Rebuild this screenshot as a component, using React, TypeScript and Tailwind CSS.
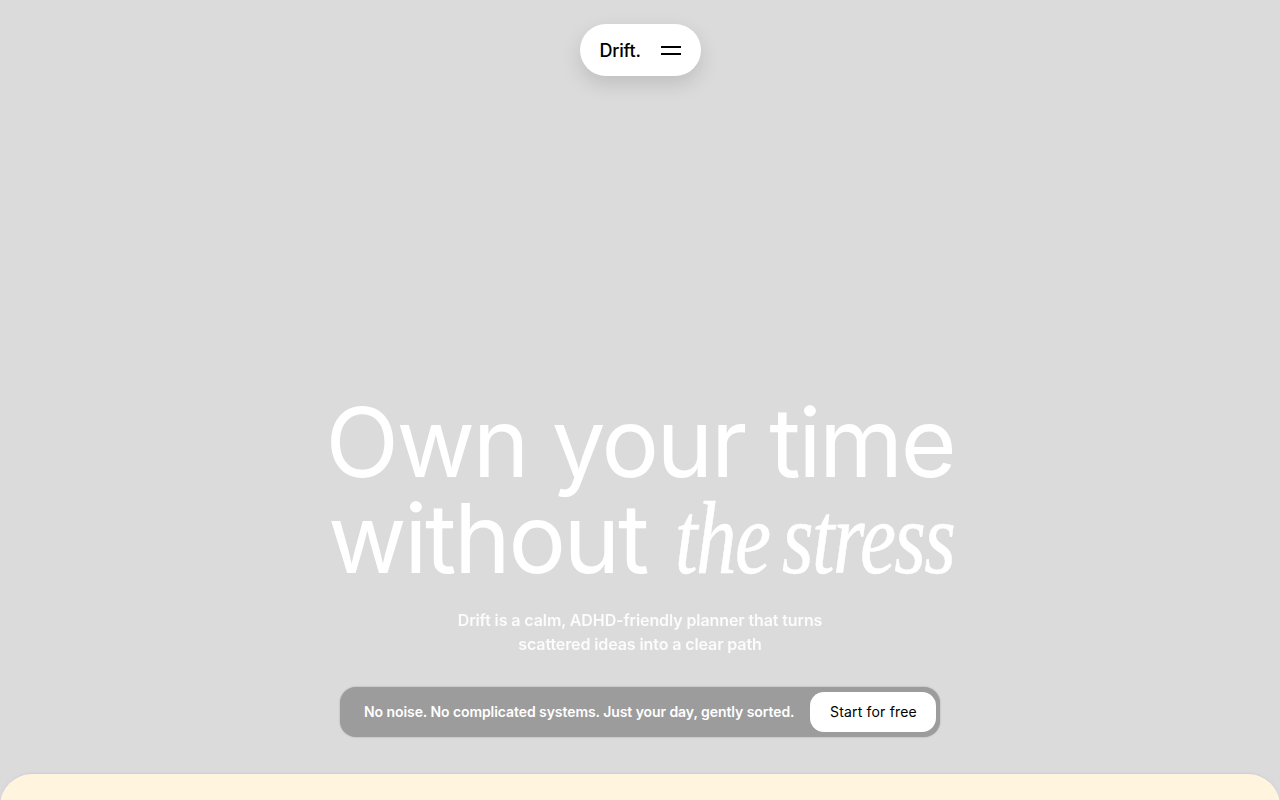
export default function App() {
  return (
    <div className="h-[800px] overflow-hidden bg-[#dbdbdb] flex flex-col items-center font-['Inter',sans-serif]">
      <nav className="mt-6 w-[121px] h-[52px] shrink-0 rounded-full bg-white flex items-center justify-between pl-5 pr-5 shadow-[0_8px_20px_rgba(0,0,0,0.13)]">
        <span className="pt-px text-[18px] font-medium leading-none tracking-[-0.2px] text-black">Drift.</span>
        <span className="flex flex-col gap-[5px] w-5">
          <span className="block h-[2px] w-5 bg-black" />
          <span className="block h-[2px] w-5 bg-black" />
        </span>
      </nav>
      <h1 className="mt-[318px] text-center text-white text-[96px] leading-[96px] font-normal tracking-[-2.4px] whitespace-nowrap blur-[0.4px]">
        <span className="block">Own your time</span>
        <span className="flex items-baseline justify-center gap-[28px]">
          <span>without</span>
          <span className="inline-block w-[277px] origin-left scale-x-[0.78] text-left font-['Liberation_Serif',serif] italic font-normal tracking-[-2px] [word-spacing:-8px] [-webkit-text-stroke:0.6px_white] text-[104px]">the stress</span>
        </span>
      </h1>
      <p className="mt-[22px] text-center text-white/90 text-[16px] leading-6 font-semibold tracking-[-0.1px] blur-[0.4px]">
        Drift is a calm, ADHD-friendly planner that turns
        <br />
        scattered ideas into a clear path
      </p>
      <div className="mt-[31px] w-[600px] h-[50px] shrink-0 rounded-[16px] bg-[#9c9c9c] flex items-center justify-between pl-6 pr-1 shadow-[0_0_2px_rgba(0,0,0,0.25)]">
        <span className="pb-[2px] text-[14px] font-semibold tracking-[-0.07px] text-white whitespace-nowrap">No noise. No complicated systems. Just your day, gently sorted.</span>
        <button className="w-[126px] h-10 pb-[2px] pl-px rounded-[14px] bg-white text-black text-[14px] font-normal tracking-[0.17px]">Start for free</button>
      </div>
      <div className="mt-[37px] w-full h-[100px] shrink-0 rounded-t-[32px] bg-[#fff5df] shadow-[0_-1px_2px_rgba(200,190,220,0.5)]" />
    </div>
  );
}
